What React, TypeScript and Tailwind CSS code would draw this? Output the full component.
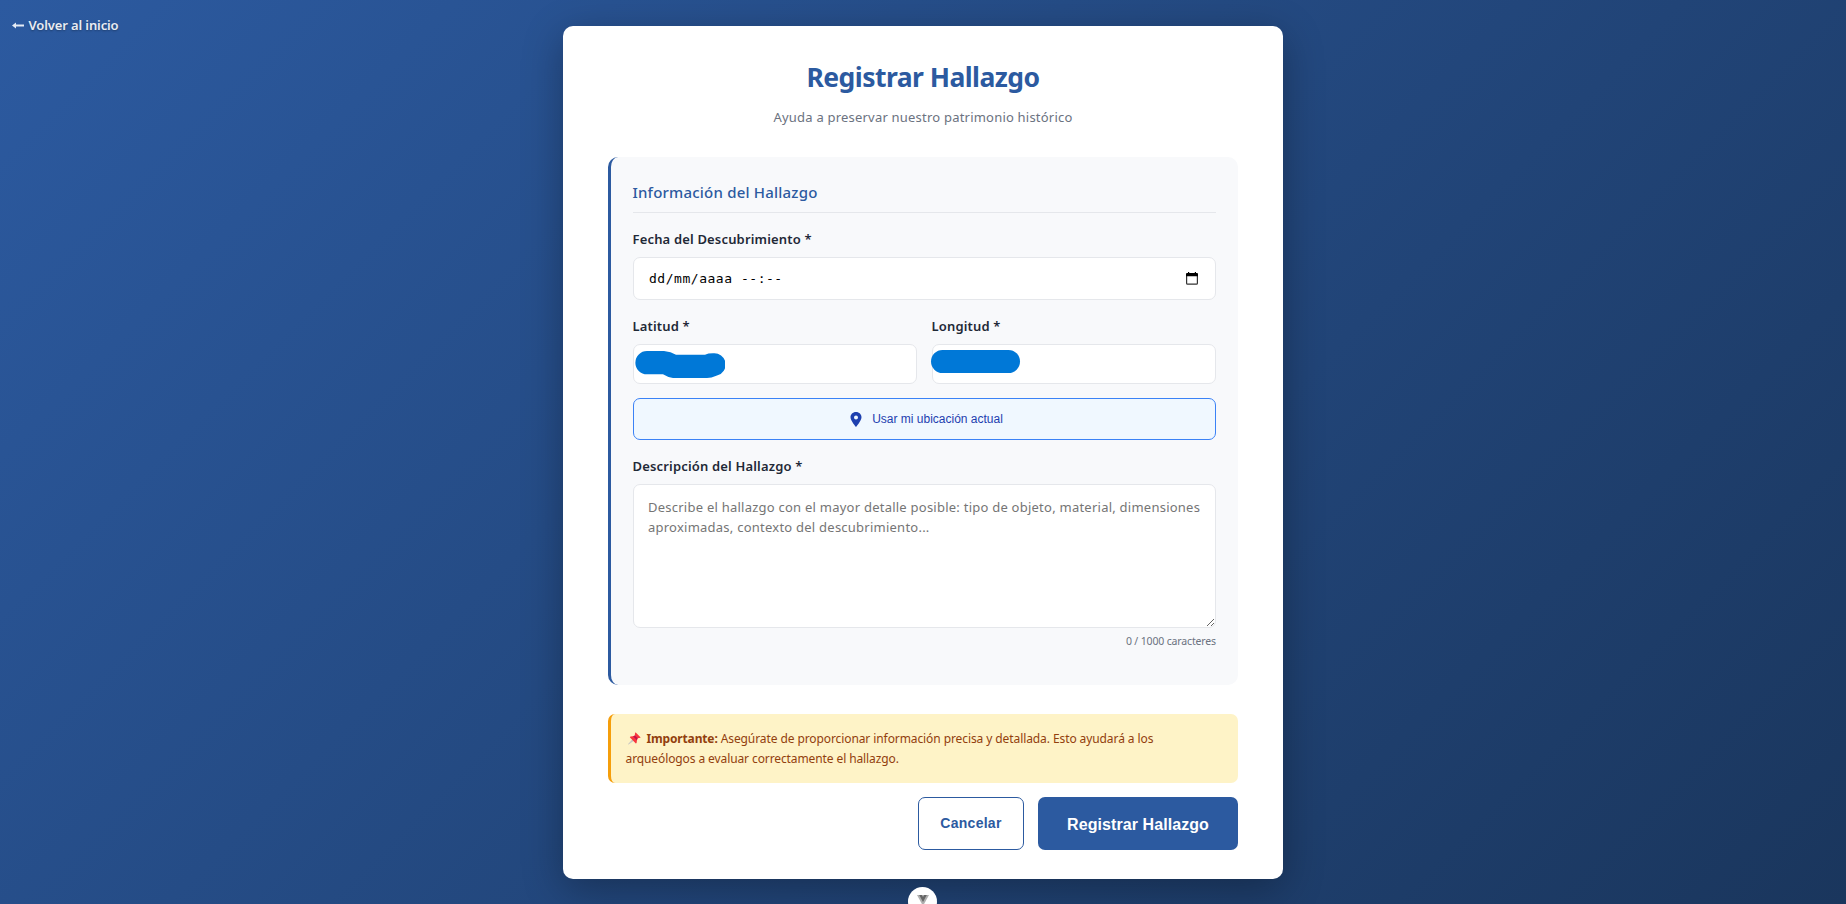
import type { ReactNode } from 'react';

function Label({ children, className = '' }: { children: ReactNode; className?: string }) {
  return (
    <span className={`-ml-[0.5px] block h-[18px] whitespace-nowrap text-[13px] font-semibold leading-[18px] tracking-[0.17px] text-[#1f2937] ${className}`}>
      {children}
    </span>
  );
}

function CalendarIcon() {
  return (
    <svg width="12" height="13" viewBox="0 0 12 13" className="-mt-px shrink-0">
      <path d="M0.6 3V11.2Q0.6 12.2 1.6 12.2H10.4Q11.4 12.2 11.4 11.2V3" fill="none" stroke="#333" strokeWidth="1.2" />
      <path d="M1 1H2V0H3.2V1H8.8V0H10V1H11Q12 1 12 2V4.2H0V2Q0 1 1 1Z" fill="#000" />
    </svg>
  );
}

function PinIcon() {
  return (
    <svg width="12" height="15" viewBox="0 0 12 15" className="shrink-0">
      <path
        fillRule="evenodd"
        fill="#1e40af"
        d="M6 0C2.7 0 0.5 2.5 0.5 5.3C0.5 8.8 6 15 6 15C6 15 11.5 8.8 11.5 5.3C11.5 2.5 9.3 0 6 0ZM6 3.4A2 2 0 1 1 6 7.4A2 2 0 1 1 6 3.4Z"
      />
    </svg>
  );
}

function Pushpin() {
  return (
    <svg width="13" height="13" viewBox="0 0 13 13" className="ml-[2px] mr-[6px] inline-block align-[-2px]">
      <path d="M4.5 7.5L0.3 12.3L5.5 8.7Z" fill="#c3c3c3" stroke="#c3c3c3" strokeWidth="0.5" />
      <path d="M7.5 0.3L12.7 5.4L11.3 6L9.2 6.3L8.6 10.9L7.8 11.5L1.8 5.3L2.5 4.4L6.7 3.9L7 1.4Z" fill="#f7363e" />
      <path d="M6.7 3.4L9.8 6.3L8.9 8.3L5 4.2Z" fill="#c40f4d" />
    </svg>
  );
}

export default function App() {
  return (
    <div className="relative h-[904px] w-full overflow-hidden bg-[linear-gradient(135deg,#2c5aa0_0%,#1a365d_100%)] pt-[26px] font-['Noto_Sans',sans-serif]">
      <a className="absolute left-[12px] top-[16px] flex items-center whitespace-nowrap text-[13px] font-semibold leading-[18px] text-white/90 [text-shadow:0_1px_2px_rgba(0,0,0,0.3)]">
        <svg width="12" height="7" viewBox="0 0 12 7" className="mr-[4.5px]">
          <path d="M0 3.5L4 0.5V2.4H12V4.6H4V6.5Z" fill="#e6ecf5" />
        </svg>
        <span className="tracking-[-0.12px]">Volver al inicio</span>
      </a>

      <main className="mx-auto flex h-[853px] w-[720px] flex-col rounded-[10px] bg-white px-[45px] shadow-[0_10px_40px_rgba(0,0,0,0.3)]">
        <h1 className="mt-[31px] text-center text-[26.5px] font-bold leading-[40px] tracking-[-0.54px] text-[#2c5aa0]">
          Registrar Hallazgo
        </h1>
        <p className="mt-[10px] text-center text-[13px] leading-[20px] tracking-[0.21px] text-[#6b7280]">
          Ayuda a preservar nuestro patrimonio histórico
        </p>

        <section className="mt-[30px] flex h-[528px] shrink-0 flex-col rounded-[10px] border-l-[3px] border-[#2c5aa0] bg-[#f8f9fb] px-[22px]">
          <h2 className="mt-[22px] h-[34px] border-b border-[#e5e7eb] text-[15px] font-medium leading-[26px] tracking-[0.2px] text-[#2c5aa0]">
            <span className="-ml-[0.5px]">Información del Hallazgo</span>
          </h2>

          <Label className="mt-[17px]">Fecha del Descubrimiento *</Label>
          <div className="mt-[9px] flex h-[43px] shrink-0 items-center justify-between rounded-[7px] border border-[#e5e7eb] bg-white pl-[15px] pr-[17px]">
            <span className="whitespace-pre font-['DejaVu_Sans_Mono',monospace] text-[13px] tracking-[0.53px] text-black">
              dd/mm/aaaa --:--
            </span>
            <CalendarIcon />
          </div>

          <div className="mt-[17px] grid shrink-0 grid-cols-2 gap-[15px]">
            <div>
              <Label>Latitud *</Label>
              <div className="mt-[9px] h-[40px] rounded-[7px] border border-[#e5e7eb] bg-white pl-[1px] pt-[6px]">
                <svg width="90" height="28" viewBox="0 0 90 28">
                  <path
                    d="M12 0H29Q36 0.5 41 3.7H70Q73 2.3 78 2.3A11.3 11.3 0 0 1 82 24.5Q76 27 72 27H38Q33 26.5 28 23.3H12A11.6 11.6 0 0 1 12 0Z"
                    fill="#0078d7"
                  />
                </svg>
              </div>
            </div>
            <div>
              <Label>Longitud *</Label>
              <div className="mt-[9px] h-[40px] rounded-[7px] border border-[#e5e7eb] bg-white pt-[5px]">
                <div className="-ml-[2px] h-[23px] w-[89px] rounded-full bg-[#0078d7]" />
              </div>
            </div>
          </div>

          <button className="mt-[14px] flex h-[42px] shrink-0 items-center justify-center gap-[10px] rounded-[7px] border border-[#3b82f6] bg-[#f0f8ff] pl-[4px] font-['Liberation_Sans',Arial,sans-serif] text-[12px] text-[#1e40af]">
            <PinIcon />
            <span className="whitespace-nowrap">Usar mi ubicación actual</span>
          </button>

          <Label className="mt-[17px]">Descripción del Hallazgo *</Label>
          <textarea
            className="mt-[9px] block h-[144px] w-full shrink-0 resize-y rounded-[7px] border border-[#e5e7eb] bg-white px-[14px] py-[12px] text-[13px] leading-[20px] tracking-[0.24px] placeholder:text-[#757575]"
            placeholder="Describe el hallazgo con el mayor detalle posible: tipo de objeto, material, dimensiones aproximadas, contexto del descubrimiento..."
          />
          <span className="mt-[5px] text-right text-[10.5px] leading-[16px] tracking-[-0.15px] text-[#6b7280]">
            0 / 1000 caracteres
          </span>
        </section>

        <div className="mt-[29px] h-[69px] shrink-0 rounded-[7px] border-l-[3px] border-[#f59e0b] bg-[#fef3c7] pl-[14.5px] pt-[15px] text-[12px] leading-[20px] tracking-[-0.09px] text-[#92400e]">
          <div className="whitespace-nowrap">
            <Pushpin />
            <strong className="tracking-[-0.15px]">Importante:</strong> Asegúrate de proporcionar información precisa y detallada. Esto ayudará a los
          </div>
          <div className="whitespace-nowrap tracking-[-0.1px]">arqueólogos a evaluar correctamente el hallazgo.</div>
        </div>

        <div className="mt-[14px] flex shrink-0 justify-end gap-[14px] font-['Liberation_Sans',Arial,sans-serif] font-bold">
          <button className="h-[53px] w-[106px] rounded-[7px] border border-[#2c5aa0] bg-white text-[14px] tracking-[0.27px] text-[#2c5aa0]">
            Cancelar
          </button>
          <button className="h-[53px] w-[200px] rounded-[7px] bg-[#2c5aa0] pt-[2px] text-[16px] tracking-[0.08px] text-white">
            Registrar Hallazgo
          </button>
        </div>
      </main>

      <div className="absolute left-[908px] top-[887px] flex h-[29px] w-[29px] justify-center rounded-full bg-white pt-[8px]">
        <svg width="12" height="11" viewBox="0 0 12 11">
          <path d="M0 0H12L6 11Z" fill="#b0b0b0" />
          <path d="M2.2 0H4.8L6 2L7.2 0H9.8L6 7Z" fill="#666" />
        </svg>
      </div>
    </div>
  );
}
